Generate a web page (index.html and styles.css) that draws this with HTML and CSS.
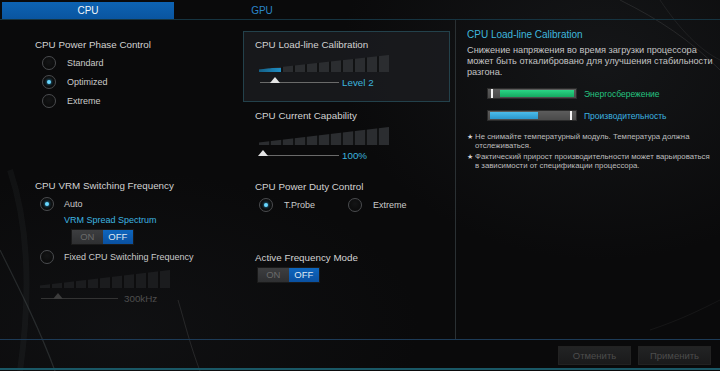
FILE: index.html
```html
<!DOCTYPE html>
<html lang="ru">
<head>
<meta charset="utf-8">
<title>CPU</title>
<link rel="stylesheet" href="styles.css">
</head>
<body>
<div class="app">
  <svg class="bg-art" width="720" height="371" viewBox="0 0 720 371" aria-hidden="true">
    <path d="M0 250 C 20 290, 40 330, 55 371" stroke="#9aa" stroke-opacity="0.18" stroke-width="1.2" fill="none"/>
    <path d="M10 170 C 30 230, 30 300, 20 371" stroke="#9aa" stroke-opacity="0.05" stroke-width="6" fill="none"/>
    <path d="M178 300 C 184 320, 190 345, 200 371" stroke="#aaa" stroke-opacity="0.16" stroke-width="1" fill="none"/>
    <path d="M620 0 C 660 20, 690 40, 720 70" stroke="#aaa" stroke-opacity="0.14" stroke-width="1" fill="none"/>
    <path d="M660 0 C 680 30, 700 50, 720 60" stroke="#aaa" stroke-opacity="0.1" stroke-width="1" fill="none"/>
    <path d="M650 330 C 680 320, 700 310, 720 300" stroke="#aaa" stroke-opacity="0.08" stroke-width="1" fill="none"/>
  </svg>

  <div class="tabs">
    <div class="tab active">CPU</div>
    <div class="tab">GPU</div>
  </div>

  <div class="main">
    <div class="col col-left">
      <div class="heading">CPU Power Phase Control</div>
      <div class="radio-list phase">
        <div class="radio-row"><span class="radio"></span><span class="rlabel">Standard</span></div>
        <div class="radio-row"><span class="radio on"></span><span class="rlabel">Optimized</span></div>
        <div class="radio-row"><span class="radio"></span><span class="rlabel">Extreme</span></div>
      </div>

      <div class="heading vrm-head">CPU VRM Switching Frequency</div>
      <div class="vrm">
        <div class="radio-row"><span class="radio on"></span><span class="rlabel">Auto</span></div>
        <div class="sub-title">VRM Spread Spectrum</div>
        <div class="toggle vrm-toggle"><span class="t-on">ON</span><span class="t-off">OFF</span></div>
        <div class="radio-row fixed-row"><span class="radio"></span><span class="rlabel">Fixed CPU Switching Frequency</span></div>
        <div class="wedge disabled"></div>
        <div class="slider disabled">
          <div class="track"><span class="thumb thumb-vrm"></span></div>
          <span class="value">300kHz</span>
        </div>
      </div>
    </div>

    <div class="col col-mid">
      <div class="box">
        <div class="heading">CPU Load-line Calibration</div>
        <div class="wedge"><span class="wedge-fill"></span></div>
        <div class="slider">
          <div class="track"><span class="thumb thumb-llc"></span></div>
          <span class="value">Level 2</span>
        </div>
      </div>

      <div class="section cap">
        <div class="heading">CPU Current Capability</div>
        <div class="wedge"></div>
        <div class="slider">
          <div class="track"><span class="thumb thumb-cap"></span></div>
          <span class="value">100%</span>
        </div>
      </div>

      <div class="section duty">
        <div class="heading">CPU Power Duty Control</div>
        <div class="radio-inline">
          <div class="radio-row opt-first"><span class="radio on"></span><span class="rlabel">T.Probe</span></div>
          <div class="radio-row"><span class="radio"></span><span class="rlabel">Extreme</span></div>
        </div>
      </div>

      <div class="section afm">
        <div class="heading">Active Frequency Mode</div>
        <div class="toggle afm-toggle"><span class="t-on">ON</span><span class="t-off">OFF</span></div>
      </div>
    </div>

    <div class="col col-right">
      <div class="info-title">CPU Load-line Calibration</div>
      <p class="info-desc">Снижение напряжения во время загрузки процессора<br>может быть откалибровано для улучшения стабильности<br>разгона.</p>
      <div class="legend">
        <div class="legend-row">
          <div class="lbar"><span class="lfill green"></span><span class="lmark mark-left"></span></div>
          <span class="llabel green-text">Энергосбережение</span>
        </div>
        <div class="legend-row">
          <div class="lbar"><span class="lfill blue"></span><span class="lmark mark-right"></span></div>
          <span class="llabel blue-text">Производительность</span>
        </div>
      </div>
      <ul class="notes">
        <li>Не снимайте температурный модуль. Температура должна<br>отслеживаться.</li>
        <li>Фактический прирост производительности может варьироваться<br>в зависимости от спецификации процессора.</li>
      </ul>
    </div>
  </div>

  <div class="footer">
    <button class="btn">Отменить</button>
    <button class="btn">Применить</button>
  </div>
</div>
</body>
</html>
```

FILE: styles.css
```css
* { box-sizing: border-box; }
html, body { margin: 0; padding: 0; }
body {
  width: 720px;
  height: 371px;
  overflow: hidden;
  background: #0a0a0b;
  font-family: "Liberation Sans", Arial, sans-serif;
  color: #cfcfcf;
}
.app {
  position: relative;
  width: 720px;
  height: 371px;
  display: flex;
  flex-direction: column;
  background:
    radial-gradient(ellipse 260px 200px at 600px 60px, rgba(40,44,48,0.35), transparent),
    radial-gradient(ellipse 300px 160px at 120px 330px, rgba(30,32,36,0.3), transparent),
    #0a0a0b;
}
.bg-art {
  position: absolute;
  left: 0; top: 0;
  pointer-events: none;
}
.tabs, .main, .footer { position: relative; }

/* tabs */
.tabs {
  height: 20px;
  padding: 2px 0 0 2px;
  display: flex;
  border-bottom: 1px solid #163441;
}
.tab {
  width: 172px;
  height: 17px;
  font-size: 10px;
  line-height: 17px;
  text-align: center;
  color: #2a86c9;
  margin-right: 2px;
}
.tab.active {
  background: linear-gradient(#0d63b3, #0a55a0);
  color: #f2f6fa;
}

/* main */
.main {
  height: 319px;
  display: flex;
}
.col { height: 100%; }
.col-left { width: 240px; padding: 18px 0 0 35px; }
.col-mid { width: 215px; padding: 11px 0 0 3px; }
.col-right {
  width: 265px;
  border-left: 1px solid #2a3033;
  padding: 8px 0 0 11px;
}

.heading {
  font-size: 9.8px;
  line-height: 14px;
  color: #d2d2d2;
  white-space: nowrap;
}

/* radios */
.radio-row {
  display: flex;
  align-items: center;
  height: 19px;
}
.radio {
  width: 14px;
  height: 14px;
  border-radius: 50%;
  border: 1px solid #4a4c4f;
  background: radial-gradient(circle at 50% 40%, #141516, #070707);
  box-shadow: 0 0 1px rgba(255,255,255,0.08);
  position: relative;
  flex: none;
}
.radio.on::after {
  content: "";
  position: absolute;
  left: 4px; top: 4px;
  width: 4px; height: 4px;
  border-radius: 50%;
  background: #6ad8ff;
  box-shadow: 0 0 3px #2fb8f0;
}
.rlabel {
  font-size: 9px;
  color: #cacaca;
  white-space: nowrap;
}
.phase { margin-top: 1px; margin-left: 7px; }
.phase .rlabel { margin-left: 11px; }

.vrm-head { margin-top: 69px; }
.vrm { margin-left: 5px; }
.vrm > .radio-row:first-child { margin-top: 1px; }
.vrm .rlabel { margin-left: 10px; }
.sub-title {
  font-size: 9px;
  line-height: 14px;
  color: #3db5e0;
  margin-left: 24px;
}
.fixed-row { margin-top: 2px; }

/* toggle */
.toggle {
  display: flex;
  width: 63px;
  height: 16px;
  border: 1px solid #1a1a1a;
  font-size: 9.5px;
  line-height: 14px;
  text-align: center;
}
.t-on {
  flex: 1;
  background: linear-gradient(#3d3e40, #2e2f31);
  color: #6a6a6a;
}
.t-off {
  flex: 1;
  background: linear-gradient(#0e66be, #0a50a0);
  color: #dfe8f2;
}
.vrm-toggle { margin: 2px 0 0 31px; }

/* wedges */
.wedge {
  position: relative;
  width: 130px;
  height: 18px;
  margin-top: 4px;
  clip-path: polygon(0 86%, 100% 0, 100% 100%, 0 100%);
  background: repeating-linear-gradient(90deg, #2b2d30 0 10px, #111213 10px 12px);
}
.wedge.disabled {
  background: repeating-linear-gradient(90deg, #1b1c1e 0 10px, #0d0d0e 10px 12px);
}
.wedge-fill {
  position: absolute;
  left: 0; bottom: 0;
  height: 4px;
  width: 22px;
  background: linear-gradient(90deg, #145f86, #1f8ec4);
}

/* sliders */
.slider {
  display: flex;
  align-items: center;
  height: 14px;
  margin-top: 3px;
}
.track {
  position: relative;
  width: 79px;
  height: 1px;
  background: #6a6a6a;
  margin-left: 1px;
}
.thumb {
  position: absolute;
  bottom: 0;
  width: 0; height: 0;
  border-left: 5px solid transparent;
  border-right: 5px solid transparent;
  border-bottom: 6px solid #e4e4e4;
}
.thumb-llc { left: 10px; }
.thumb-cap { left: -2px; }
.thumb-vrm { left: 12px; }
.value {
  margin-left: 3px;
  font-size: 9.8px;
  color: #3cb4de;
}
.slider.disabled .track { background: #333; }
.slider.disabled .thumb { border-bottom-color: #3c3c3c; }
.slider.disabled .value { color: #4e4e4e; }
.vrm .slider .track { width: 77px; }
.vrm .slider .value { margin-left: 6px; }

/* middle */
.box {
  width: 207px;
  height: 71px;
  border: 1px solid #23414b;
  background: rgba(28,30,33,0.75);
  padding: 6px 0 0 11px;
}
.box .wedge { margin-left: 4px; margin-top: 3px; height: 17px; }
.box .slider { margin-left: 4px; }
.section { padding-left: 12px; }
.section .wedge, .section .slider { margin-left: 4px; }
.cap { margin-top: 7px; }
.duty { margin-top: 18px; }
.radio-inline {
  display: flex;
  margin: 1px 0 0 4px;
}
.radio-inline .rlabel { margin-left: 11px; }
.opt-first { width: 89px; }
.afm { margin-top: 37px; }
.afm-toggle { margin: 2px 0 0 2px; }

/* right panel */
.info-title {
  font-size: 10px;
  line-height: 14px;
  color: #3fb7dd;
}
.info-desc {
  margin: 3px 0 0;
  font-size: 9.2px;
  line-height: 11px;
  color: #c4c4c4;
  white-space: nowrap;
}
.legend { margin: 10px 0 0 20px; }
.legend-row {
  display: flex;
  align-items: center;
  height: 11px;
  margin-bottom: 11px;
}
.lbar {
  position: relative;
  width: 90px;
  height: 11px;
  background: linear-gradient(#5c5c5c, #4a4a4a);
  border: 1px solid #2b2b2b;
  flex: none;
}
.lfill {
  position: absolute;
  top: 1px; bottom: 1px;
}
.lfill.green {
  left: 12px; right: 2px;
  background: linear-gradient(#2bd585, #14a860);
}
.lfill.blue {
  left: 2px; width: 48px;
  background: linear-gradient(#4cbcea, #2a96cc);
}
.lmark {
  position: absolute;
  top: 0; bottom: 0;
  width: 2px;
  background: #f4f4f4;
}
.mark-left { left: 3px; }
.mark-right { right: 4px; }
.llabel {
  margin-left: 7px;
  font-size: 8.5px;
  white-space: nowrap;
}
.green-text { color: #25c480; }
.blue-text { color: #3cb4e0; }

.notes {
  list-style: none;
  margin: 2px 0 0;
  padding: 0;
}
.notes li {
  position: relative;
  padding-left: 8px;
  font-size: 7.8px;
  line-height: 9px;
  color: #bdbdbd;
  margin-bottom: 2px;
  white-space: nowrap;
}
.notes li::before {
  content: "★";
  position: absolute;
  left: 0; top: 0;
  font-size: 7px;
  color: #d0d0d0;
}

/* footer */
.footer {
  height: 31px;
  border-top: 1px solid #1d3b57;
  border-bottom: 2px solid #1a5866;
  display: flex;
  justify-content: flex-end;
  gap: 7px;
  padding: 6px 9px 0 0;
}
.btn {
  width: 73px;
  height: 19px;
  border: 1px solid #222;
  background: linear-gradient(#222324, #1a1a1b);
  color: #4c4c4c;
  font-family: "Liberation Sans", Arial, sans-serif;
  font-size: 9.5px;
  padding: 0;
}
```
